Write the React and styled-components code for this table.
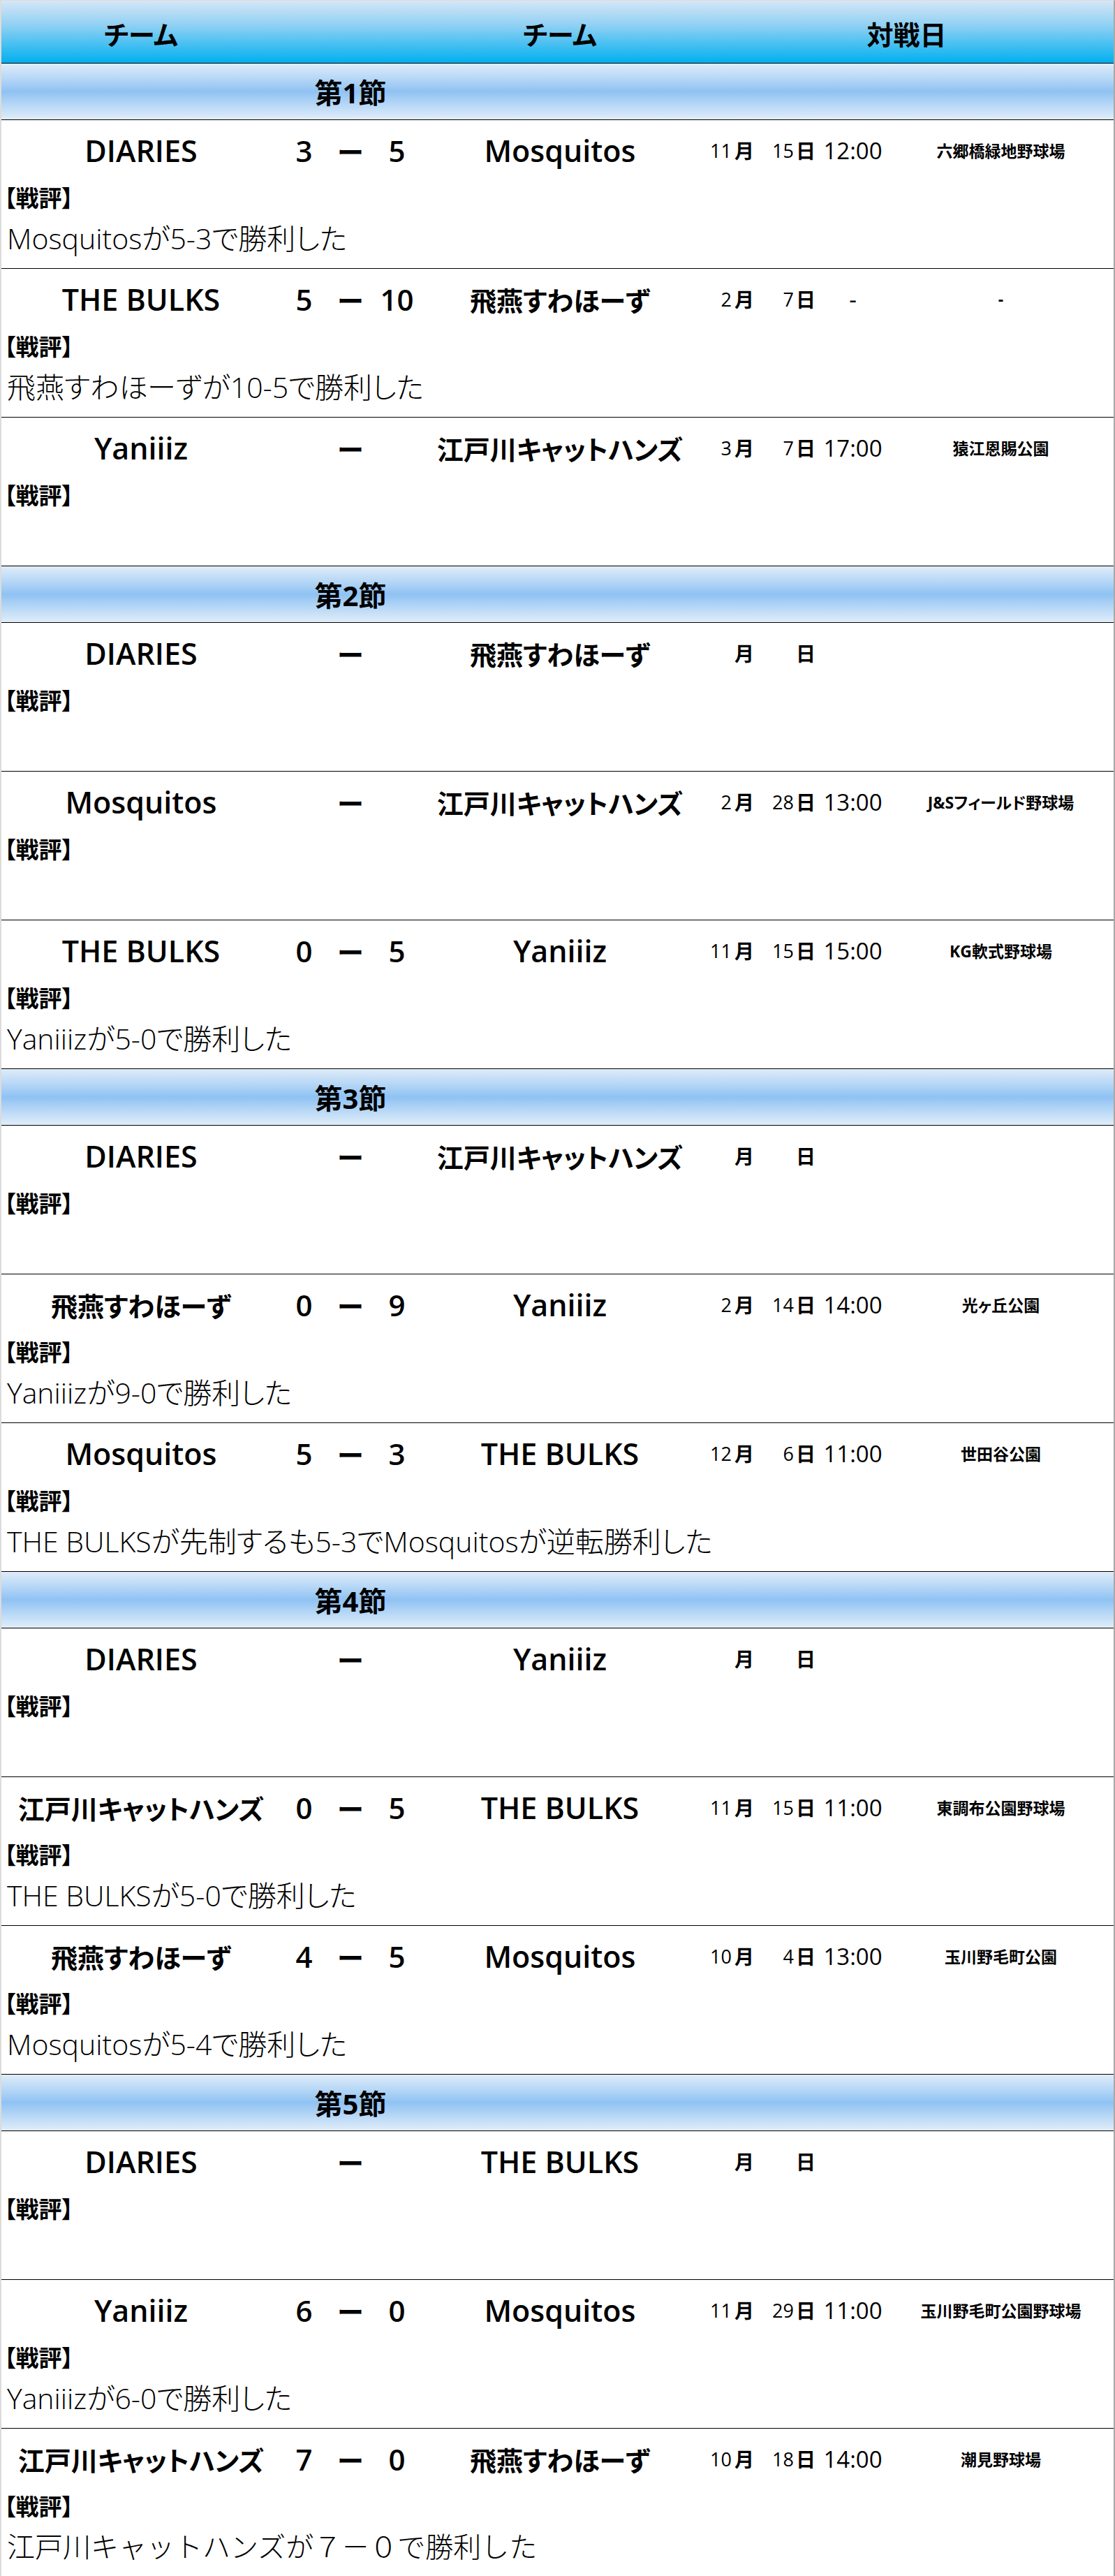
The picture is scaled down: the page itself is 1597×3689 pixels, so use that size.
import React from "react";
import styled, { createGlobalStyle } from "styled-components";

const GlobalStyle = createGlobalStyle`
  html, body { margin: 0; padding: 0; background: #ffffff; }
  body {
    font-family: "Open Sans", "Noto Sans CJK JP", sans-serif;
    color: #000;
    font-feature-settings: "palt";
  }
`;

const Table = styled.div`
  border-top: 1px solid #dcdcdc;
  border-left: 2px solid #dcdcdc;
  border-right: 2px solid #a8a8a8;
  background: #fff;
`;

const HeaderRow = styled.div`
  display: grid;
  grid-template-columns: 400px 200px 400px 1fr;
  height: 86px;
  padding-top: 3px;
  align-items: center;
  border-bottom: 1px solid #000;
  background: linear-gradient(to bottom, #d6e6f6 0%, #8fd0f3 40%, #00b0f0 100%);
`;

const HeaderCell = styled.div`
  text-align: center;
  font-size: 38px;
  font-weight: 700;
`;

const SectionBar = styled.div`
  display: grid;
  grid-template-columns: 1000px 1fr;
  height: 80px;
  align-items: center;
  border-bottom: 1px solid #000;
  background: linear-gradient(to bottom, #dfecf9 0%, #b4d6f6 28%, #8fc2f3 50%, #b4d6f6 72%, #e0edf9 100%);
`;

const SectionTitle = styled.div`
  text-align: center;
  font-size: 40px;
  font-weight: 700;
`;

const MatchRow = styled.div`
  height: 212px;
  border-bottom: 1px solid #000;
  display: flex;
  flex-direction: column;
`;

const MatchLine = styled.div`
  display: grid;
  grid-template-columns: 400px 200px 400px 270px 1fr;
  height: 86px;
  align-items: center;
`;

const Team = styled.div`
  text-align: center;
  font-size: ${(p) => (p.$cjk ? "38px" : "43px")};
  font-weight: 600;
  white-space: nowrap;
`;

const Score = styled.div`
  display: grid;
  grid-template-columns: 67px 66px 67px;
  align-items: center;
  text-align: center;
  font-size: 42px;
  font-weight: 600;
`;

const Dash = styled.span`
  font-family: "Noto Sans CJK JP", sans-serif;
  font-weight: 700;
  font-size: 38px;
`;

const DateCell = styled.div`
  display: grid;
  grid-template-columns: 46px 36px 53px 34px 1fr;
  align-items: center;
  font-weight: 500;
`;

const Num = styled.span`
  text-align: right;
  font-size: 27px;
`;

const Unit = styled.span`
  text-align: center;
  font-size: 28px;
  font-family: "Noto Sans CJK JP", sans-serif;
  font-weight: 700;
`;

const Time = styled.span`
  text-align: center;
  font-size: 33px;
`;

const Venue = styled.div`
  text-align: center;
  font-size: 23px;
  font-weight: 700;
  white-space: nowrap;
`;

const ReviewLabel = styled.div`
  padding-left: 4px;
  font-size: 33px;
  font-weight: 700;
  line-height: 48px;
  font-family: "Noto Sans CJK JP", sans-serif;
`;

const Comment = styled.div`
  padding-left: 8px;
  font-size: ${(p) => (p.$wide ? "40px" : "41px")};
  font-weight: 300;
  line-height: 70px;
  white-space: nowrap;
  font-feature-settings: ${(p) => (p.$wide ? "normal" : '"palt"')};
`;

const isCjk = (s) => /[\u3000-\u9fff]/.test(s);

const sections = [
  {
    title: "第1節",
    matches: [
      { h: "DIARIES", hs: "3", as: "5", a: "Mosquitos", m: "11", d: "15", t: "12:00", v: "六郷橋緑地野球場", c: "Mosquitosが5-3で勝利した" },
      { h: "THE BULKS", hs: "5", as: "10", a: "飛燕すわほーず", m: "2", d: "7", t: "-", v: "-", c: "飛燕すわほーずが10-5で勝利した" },
      { h: "Yaniiiz", hs: "", as: "", a: "江戸川キャットハンズ", m: "3", d: "7", t: "17:00", v: "猿江恩賜公園", c: "" },
    ],
  },
  {
    title: "第2節",
    matches: [
      { h: "DIARIES", hs: "", as: "", a: "飛燕すわほーず", m: "", d: "", t: "", v: "", c: "" },
      { h: "Mosquitos", hs: "", as: "", a: "江戸川キャットハンズ", m: "2", d: "28", t: "13:00", v: "J&Sフィールド野球場", c: "" },
      { h: "THE BULKS", hs: "0", as: "5", a: "Yaniiiz", m: "11", d: "15", t: "15:00", v: "KG軟式野球場", c: "Yaniiizが5-0で勝利した" },
    ],
  },
  {
    title: "第3節",
    matches: [
      { h: "DIARIES", hs: "", as: "", a: "江戸川キャットハンズ", m: "", d: "", t: "", v: "", c: "" },
      { h: "飛燕すわほーず", hs: "0", as: "9", a: "Yaniiiz", m: "2", d: "14", t: "14:00", v: "光ヶ丘公園", c: "Yaniiizが9-0で勝利した" },
      { h: "Mosquitos", hs: "5", as: "3", a: "THE BULKS", m: "12", d: "6", t: "11:00", v: "世田谷公園", c: "THE BULKSが先制するも5-3でMosquitosが逆転勝利した" },
    ],
  },
  {
    title: "第4節",
    matches: [
      { h: "DIARIES", hs: "", as: "", a: "Yaniiiz", m: "", d: "", t: "", v: "", c: "" },
      { h: "江戸川キャットハンズ", hs: "0", as: "5", a: "THE BULKS", m: "11", d: "15", t: "11:00", v: "東調布公園野球場", c: "THE BULKSが5-0で勝利した" },
      { h: "飛燕すわほーず", hs: "4", as: "5", a: "Mosquitos", m: "10", d: "4", t: "13:00", v: "玉川野毛町公園", c: "Mosquitosが5-4で勝利した" },
    ],
  },
  {
    title: "第5節",
    matches: [
      { h: "DIARIES", hs: "", as: "", a: "THE BULKS", m: "", d: "", t: "", v: "", c: "" },
      { h: "Yaniiiz", hs: "6", as: "0", a: "Mosquitos", m: "11", d: "29", t: "11:00", v: "玉川野毛町公園野球場", c: "Yaniiizが6-0で勝利した" },
      { h: "江戸川キャットハンズ", hs: "7", as: "0", a: "飛燕すわほーず", m: "10", d: "18", t: "14:00", v: "潮見野球場", c: "江戸川キャットハンズが７－０で勝利した", wide: true },
    ],
  },
];

function Match({ g }) {
  return (
    <MatchRow>
      <MatchLine>
        <Team $cjk={isCjk(g.h)}>{g.h}</Team>
        <Score>
          <span>{g.hs}</span>
          <Dash>ー</Dash>
          <span>{g.as}</span>
        </Score>
        <Team $cjk={isCjk(g.a)}>{g.a}</Team>
        <DateCell>
          <Num>{g.m}</Num>
          <Unit>月</Unit>
          <Num>{g.d}</Num>
          <Unit>日</Unit>
          <Time>{g.t}</Time>
        </DateCell>
        <Venue>{g.v}</Venue>
      </MatchLine>
      <ReviewLabel>【戦評】</ReviewLabel>
      <Comment $wide={g.wide}>{g.c}</Comment>
    </MatchRow>
  );
}

export default function App() {
  return (
    <>
      <GlobalStyle />
      <Table>
        <HeaderRow>
          <HeaderCell>チーム</HeaderCell>
          <HeaderCell />
          <HeaderCell>チーム</HeaderCell>
          <HeaderCell>対戦日</HeaderCell>
        </HeaderRow>
        {sections.map((s) => (
          <React.Fragment key={s.title}>
            <SectionBar>
              <SectionTitle>{s.title}</SectionTitle>
            </SectionBar>
            {s.matches.map((g, i) => (
              <Match key={i} g={g} />
            ))}
          </React.Fragment>
        ))}
      </Table>
    </>
  );
}
